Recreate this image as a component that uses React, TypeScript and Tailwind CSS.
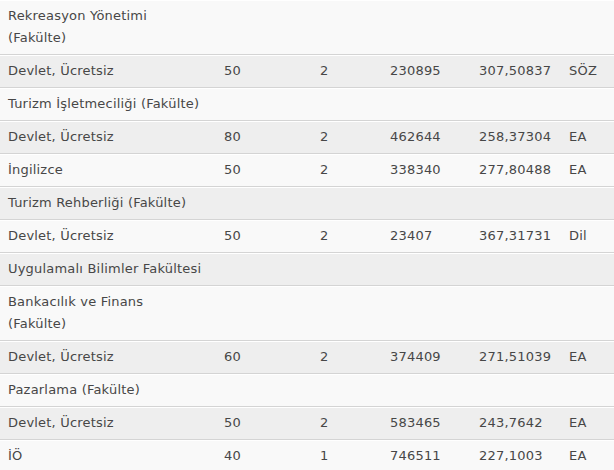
import React from "react";

type Row = { c: React.ReactNode; n?: string; k?: string; s?: string; p?: string; t?: string };

const rows: Row[] = [
  { c: <>Rekreasyon Yönetimi<br />(Fakülte)</> },
  { c: "Devlet, Ücretsiz", n: "50", k: "2", s: "230895", p: "307,50837", t: "SÖZ" },
  { c: "Turizm İşletmeciliği (Fakülte)" },
  { c: "Devlet, Ücretsiz", n: "80", k: "2", s: "462644", p: "258,37304", t: "EA" },
  { c: "İngilizce", n: "50", k: "2", s: "338340", p: "277,80488", t: "EA" },
  { c: "Turizm Rehberliği (Fakülte)" },
  { c: "Devlet, Ücretsiz", n: "50", k: "2", s: "23407", p: "367,31731", t: "Dil" },
  { c: "Uygulamalı Bilimler Fakültesi" },
  { c: <>Bankacılık ve Finans<br />(Fakülte)</> },
  { c: "Devlet, Ücretsiz", n: "60", k: "2", s: "374409", p: "271,51039", t: "EA" },
  { c: "Pazarlama (Fakülte)" },
  { c: "Devlet, Ücretsiz", n: "50", k: "2", s: "583465", p: "243,7642", t: "EA" },
  { c: "İÖ", n: "40", k: "1", s: "746511", p: "227,1003", t: "EA" },
];

export default function App() {
  return (
    <div
      className="w-[614px] h-[470px] overflow-hidden bg-[#f9f9f9] text-[13px] leading-[22px] tracking-[0.2px] text-[#474747]"
      style={{ fontFamily: '"DejaVu Sans", Verdana, sans-serif' }}
    >
      <div>
        {rows.map((r, i) => (
          <div
            key={i}
            className={`grid grid-cols-[216px_96px_70px_89px_90px_53px] border-t border-t-white border-b border-b-[#d4d4d4] pt-[4px] pb-[5px] ${
              i % 2 === 0 ? "bg-[#f9f9f9]" : "bg-[#eeeeee]"
            }`}
          >
            <div className="pl-[8px] whitespace-nowrap">{r.c}</div>
            <div className="pl-[8px]">{r.n}</div>
            <div className="pl-[8px]">{r.k}</div>
            <div className="pl-[8px]">{r.s}</div>
            <div className="pl-[8px]">{r.p}</div>
            <div className="pl-[8px]">{r.t}</div>
          </div>
        ))}
      </div>
    </div>
  );
}
